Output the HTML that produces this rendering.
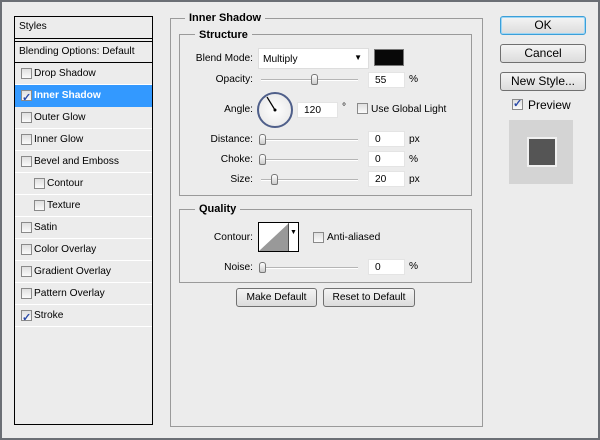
<!DOCTYPE html>
<html><head><style>
*{box-sizing:border-box;margin:0;padding:0}
body{width:600px;height:440px;background:#6b6f75;font-family:"Liberation Sans",sans-serif;font-size:10.2px;color:#000;position:relative;overflow:hidden}
#win{position:absolute;left:2px;top:2px;width:596px;height:436px;background:#ececec}
.a{position:absolute;white-space:nowrap}
.lp{position:absolute;left:14px;top:16px;width:139px;height:409px;border:1px solid #000;background:#ececec}
.row{position:absolute;left:0;width:137px;height:22px;border-bottom:1px solid #fff;line-height:21px;padding-left:19px}
.cb{position:absolute;width:11px;height:11px;border:1px solid #8a8a8a;background:linear-gradient(#e0e0e0,#fbfbfb)}
.cb.on::after{content:"✓";position:absolute;left:0;top:-3px;font-size:11px;color:#2a4aa8;font-weight:bold}
.grp{position:absolute;border:1px solid #9a9a9a}
.gt{position:absolute;background:#ececec;font-weight:bold;padding:0 4px;line-height:12px;font-size:11px}
.r{position:absolute;text-align:right;width:80px}
.inp{position:absolute;width:37px;height:16px;background:#fff;border:1px solid #e4e4e4;padding-left:6px;line-height:16px}
.sl{position:absolute;height:2px;border-top:1px solid #b5b5b5;border-bottom:1px solid #fff}
.th{position:absolute;width:7px;height:11px;border:1px solid #777;border-radius:3px 3px 2px 2px;background:linear-gradient(#fff,#ccc)}
.btn{position:absolute;height:19px;border:1px solid #707070;border-radius:3px;background:linear-gradient(#f4f4f4,#dcdcdc);text-align:center;line-height:17px}
</style></head><body><div id="win"></div>
<div class="lp">
 <div class="a" style="left:4px;top:4px">Styles</div>
 <div class="a" style="left:0;top:21px;width:137px;height:4px;border-top:1px solid #000;border-bottom:1px solid #000"></div>
 <div class="a" style="left:4px;top:29px">Blending Options: Default</div>
 <div class="a" style="left:0;top:45px;width:137px;border-top:1px solid #000"></div>
 <div class="row" style="top:46px"><span class="cb" style="left:6px;top:5px"></span>Drop Shadow</div>
 <div class="row" style="top:68px;background:#3399ff;color:#fff;font-weight:bold;border-bottom-color:#3399ff"><span class="cb on" style="left:6px;top:5px"></span>Inner Shadow</div>
 <div class="row" style="top:90px"><span class="cb" style="left:6px;top:5px"></span>Outer Glow</div>
 <div class="row" style="top:112px"><span class="cb" style="left:6px;top:5px"></span>Inner Glow</div>
 <div class="row" style="top:134px"><span class="cb" style="left:6px;top:5px"></span>Bevel and Emboss</div>
 <div class="row" style="top:156px;padding-left:32px"><span class="cb" style="left:19px;top:5px"></span>Contour</div>
 <div class="row" style="top:178px;padding-left:32px"><span class="cb" style="left:19px;top:5px"></span>Texture</div>
 <div class="row" style="top:200px"><span class="cb" style="left:6px;top:5px"></span>Satin</div>
 <div class="row" style="top:222px"><span class="cb" style="left:6px;top:5px"></span>Color Overlay</div>
 <div class="row" style="top:244px"><span class="cb" style="left:6px;top:5px"></span>Gradient Overlay</div>
 <div class="row" style="top:266px"><span class="cb" style="left:6px;top:5px"></span>Pattern Overlay</div>
 <div class="row" style="top:288px"><span class="cb on" style="left:6px;top:5px"></span>Stroke</div>
</div>

<div class="grp" style="left:170px;top:18px;width:313px;height:409px"></div>
<div class="gt" style="left:185px;top:12px">Inner Shadow</div>
<div class="grp" style="left:179px;top:34px;width:293px;height:162px"></div>
<div class="gt" style="left:195px;top:29px">Structure</div>

<div class="r" style="left:173px;top:53px">Blend Mode:</div>
<div class="a" style="left:258px;top:48px;width:111px;height:21px;background:#fff;border:1px solid #ddd;padding:5px 0 0 4px">Multiply<span style="position:absolute;right:6px;top:4px;font-size:8px">▼</span></div>
<div class="a" style="left:374px;top:49px;width:30px;height:17px;background:#080808;border:1px solid #777"></div>

<div class="r" style="left:173px;top:74px">Opacity:</div>
<div class="sl" style="left:261px;top:79px;width:97px"></div>
<div class="th" style="left:311px;top:74px"></div>
<div class="inp" style="left:368px;top:72px">55</div><div class="a" style="left:409px;top:74px">%</div>

<div class="r" style="left:173px;top:104px">Angle:</div>
<div class="a" style="left:257px;top:92px;width:36px;height:36px;border:2px solid #4f5f8a;border-radius:50%;background:radial-gradient(#fff,#e4e4e4)"></div>
<svg class="a" style="left:257px;top:92px" width="36" height="36"><line x1="18" y1="18" x2="10" y2="5" stroke="#000" stroke-width="1.2"/><circle cx="18" cy="18" r="1.5"/></svg>
<div class="inp" style="left:297px;top:102px;width:41px">120</div><div class="a" style="left:342px;top:102px">°</div>
<span class="cb" style="left:357px;top:103px"></span><div class="a" style="left:371px;top:104px">Use Global Light</div>

<div class="r" style="left:173px;top:134px">Distance:</div>
<div class="sl" style="left:261px;top:139px;width:97px"></div><div class="th" style="left:259px;top:134px"></div>
<div class="inp" style="left:368px;top:131px">0</div><div class="a" style="left:409px;top:134px">px</div>
<div class="r" style="left:173px;top:154px">Choke:</div>
<div class="sl" style="left:261px;top:159px;width:97px"></div><div class="th" style="left:259px;top:154px"></div>
<div class="inp" style="left:368px;top:151px">0</div><div class="a" style="left:409px;top:154px">%</div>
<div class="r" style="left:173px;top:174px">Size:</div>
<div class="sl" style="left:261px;top:179px;width:97px"></div><div class="th" style="left:271px;top:174px"></div>
<div class="inp" style="left:368px;top:171px">20</div><div class="a" style="left:409px;top:174px">px</div>

<div class="grp" style="left:179px;top:209px;width:293px;height:74px"></div>
<div class="gt" style="left:195px;top:203px">Quality</div>
<div class="r" style="left:173px;top:232px">Contour:</div>
<div class="a" style="left:258px;top:222px;width:41px;height:30px;border:1px solid #000;background:#fff"></div>
<svg class="a" style="left:259px;top:223px" width="30" height="28"><polygon points="0,28 30,0 30,28" fill="#999"/><line x1="30" y1="0" x2="30" y2="28" stroke="#000"/></svg>
<div class="a" style="left:290px;top:229px;font-size:7px">▼</div>
<span class="cb" style="left:313px;top:232px"></span><div class="a" style="left:327px;top:232px">Anti-aliased</div>
<div class="r" style="left:173px;top:262px">Noise:</div>
<div class="sl" style="left:261px;top:267px;width:97px"></div><div class="th" style="left:259px;top:262px"></div>
<div class="inp" style="left:368px;top:259px">0</div><div class="a" style="left:409px;top:261px">%</div>

<div class="btn" style="left:236px;top:288px;width:81px">Make Default</div>
<div class="btn" style="left:323px;top:288px;width:92px">Reset to Default</div>

<div class="btn" style="left:500px;top:16px;width:86px;border-color:#3c9fd8;box-shadow:inset 0 0 0 1px #9dd6f5;font-size:12px">OK</div>
<div class="btn" style="left:500px;top:44px;width:86px;font-size:12px">Cancel</div>
<div class="btn" style="left:500px;top:72px;width:86px;font-size:12px">New Style...</div>
<span class="cb on" style="left:512px;top:99px"></span><div class="a" style="left:528px;top:98px;font-size:12px">Preview</div>
<div class="a" style="left:509px;top:120px;width:64px;height:64px;background:#d4d4d4"></div>
<div class="a" style="left:527px;top:137px;width:30px;height:30px;background:#555;border:2px solid #f0f0f0"></div>
</body></html>
